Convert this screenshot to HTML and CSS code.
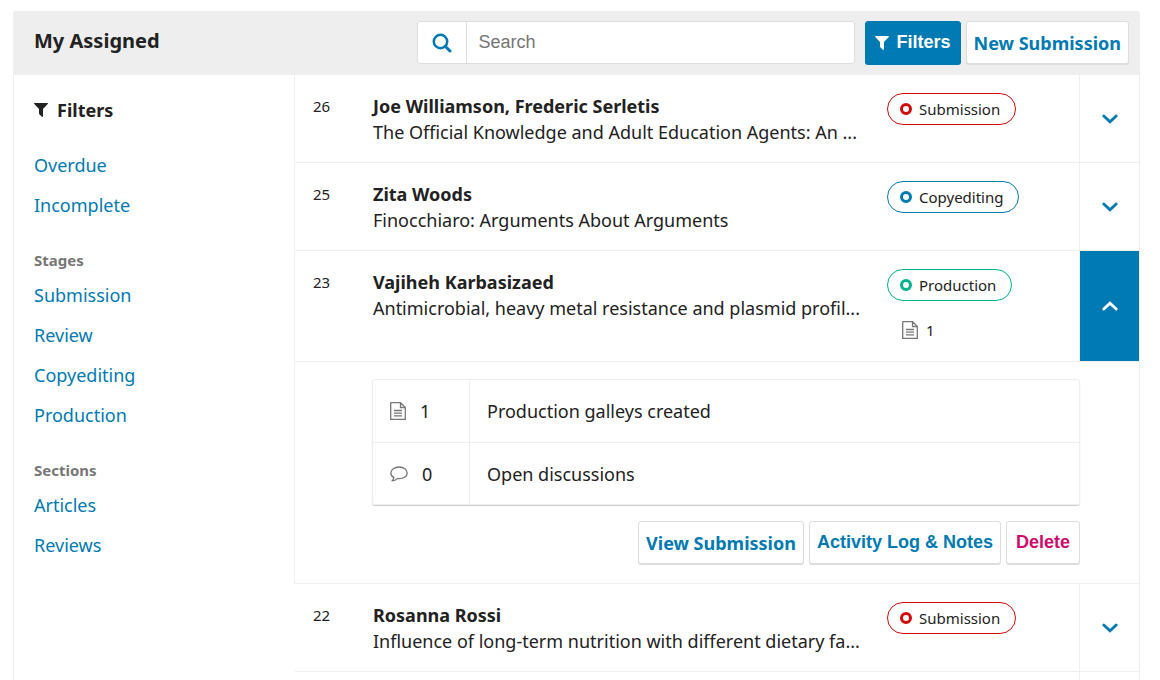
FILE: index.html
```html
<!DOCTYPE html>
<html lang="en">
<head>
<meta charset="utf-8">
<meta name="viewport" content="width=device-width, initial-scale=1">
<title>My Assigned</title>
<link rel="stylesheet" href="styles.css">
</head>
<body>
<svg class="sprite" width="0" height="0" aria-hidden="true">
  <symbol id="i-filter" viewBox="0 0 14 14"><path d="M0.6 0H13.4Q14.4 0.3 13.7 1.1L9 6V13.3Q8.8 14.3 7.9 13.7L5.4 11.2Q5 10.9 5 10.4V6L0.3 1.1Q-0.4 0.3 0.6 0Z" fill="currentColor"/></symbol>
  <symbol id="i-search" viewBox="0 0 20 20"><circle cx="8.5" cy="8.5" r="6.7" fill="none" stroke="currentColor" stroke-width="2.5"/><path d="M13.2 13.2L18 18" fill="none" stroke="currentColor" stroke-width="3" stroke-linecap="round"/></symbol>
  <symbol id="i-down" viewBox="0 0 16 10"><path d="M1.800 2L8 7.800L14.200 2" fill="none" stroke="currentColor" stroke-width="2.800" stroke-linecap="round"/></symbol>
  <symbol id="i-up" viewBox="0 0 16 10"><path d="M1.800 8L8 2.200L14.200 8" fill="none" stroke="currentColor" stroke-width="2.800" stroke-linecap="round"/></symbol>
  <symbol id="i-file" viewBox="0 0 16 18"><path d="M1.2 0.7H10.6L15.3 5.4V17.3H0.7V1.2Q0.7 0.7 1.2 0.7ZM10.5 0.8V5.5H15.2M4 8.5H12M4 11.2H12M4 13.9H12" fill="none" stroke="currentColor" stroke-width="1.3"/></symbol>
  <symbol id="i-comment" viewBox="0 0 18 16"><path d="M9.2 1C4.700 1 .8 3.500.8 6.900c0 2 1.200 3.600 3.100 4.700-.2 1.400-.9 2.300-1.900 3.300 2.300-.2 4-1 5.300-2.300.6.1 1.200.1 1.900.1 4.600 0 8-2.600 8-5.800S13.700 1 9.200 1Z" fill="none" stroke="currentColor" stroke-width="1.300" stroke-linejoin="round"/></symbol>
</svg>

<main class="panel">
  <header class="panel-header">
    <h1 class="panel-title">My Assigned</h1>
    <div class="panel-actions">
      <div class="search">
        <label class="search-label" for="search" aria-label="Search submissions"><svg class="icon-search" aria-hidden="true"><use href="#i-search"/></svg></label>
        <input class="search-input" id="search" type="search" placeholder="Search">
      </div>
      <div class="header-buttons">
        <button class="btn btn-primary" type="button"><svg class="icon-filter" aria-hidden="true"><use href="#i-filter"/></svg>Filters</button>
        <a class="btn btn-link" href="#new">New Submission</a>
      </div>
    </div>
  </header>

  <div class="panel-body">
    <aside class="sidebar">
      <h2 class="sidebar-title"><svg class="icon-filter" aria-hidden="true"><use href="#i-filter"/></svg>Filters</h2>
      <nav class="filter-group">
        <a class="filter" href="#overdue">Overdue</a>
        <a class="filter" href="#incomplete">Incomplete</a>
      </nav>
      <nav class="filter-group">
        <h3 class="filter-heading">Stages</h3>
        <a class="filter" href="#submission">Submission</a>
        <a class="filter" href="#review">Review</a>
        <a class="filter" href="#copyediting">Copyediting</a>
        <a class="filter" href="#production">Production</a>
      </nav>
      <nav class="filter-group">
        <h3 class="filter-heading">Sections</h3>
        <a class="filter" href="#articles">Articles</a>
        <a class="filter" href="#reviews">Reviews</a>
      </nav>
    </aside>

    <section class="items">
      <article class="item">
        <div class="item-summary">
          <div class="item-id">26</div>
          <div class="item-text"><div class="item-author">Joe Williamson, Frederic Serletis</div><div class="item-title">The Official Knowledge and Adult Education Agents: An ...</div></div>
          <div class="item-status"><span class="badge badge-submission">Submission</span></div>
        </div>
        <button class="expander" type="button" aria-label="Show details" aria-expanded="false"><svg class="icon-chevron" aria-hidden="true"><use href="#i-down"/></svg></button>
      </article>

      <article class="item">
        <div class="item-summary">
          <div class="item-id">25</div>
          <div class="item-text"><div class="item-author">Zita Woods</div><div class="item-title">Finocchiaro: Arguments About Arguments</div></div>
          <div class="item-status"><span class="badge badge-copyediting">Copyediting</span></div>
        </div>
        <button class="expander" type="button" aria-label="Show details" aria-expanded="false"><svg class="icon-chevron" aria-hidden="true"><use href="#i-down"/></svg></button>
      </article>

      <article class="item">
        <div class="item-summary">
          <div class="item-id">23</div>
          <div class="item-text"><div class="item-author">Vajiheh Karbasizaed</div><div class="item-title">Antimicrobial, heavy metal resistance and plasmid profil...</div></div>
          <div class="item-status"><span class="badge badge-production">Production</span><div class="item-files"><svg class="icon-file" aria-hidden="true"><use href="#i-file"/></svg>1</div></div>
        </div>
        <button class="expander expander-open" type="button" aria-label="Hide details" aria-expanded="true"><svg class="icon-chevron" aria-hidden="true"><use href="#i-up"/></svg></button>
      </article>

      <div class="details">
        <table class="stats">
          <tr><td class="stat-count"><div class="stat-value"><svg class="icon-file" aria-hidden="true"><use href="#i-file"/></svg>1</div></td><td class="stat-name">Production galleys created</td></tr>
          <tr><td class="stat-count"><div class="stat-value"><svg class="icon-comment" aria-hidden="true"><use href="#i-comment"/></svg>0</div></td><td class="stat-name">Open discussions</td></tr>
        </table>
        <div class="details-actions">
          <a class="btn btn-link" href="#view">View Submission</a>
          <button class="btn" type="button">Activity Log &amp; Notes</button>
          <button class="btn btn-danger" type="button">Delete</button>
        </div>
      </div>

      <article class="item">
        <div class="item-summary">
          <div class="item-id">22</div>
          <div class="item-text"><div class="item-author">Rosanna Rossi</div><div class="item-title">Influence of long-term nutrition with different dietary fa...</div></div>
          <div class="item-status"><span class="badge badge-submission">Submission</span></div>
        </div>
        <button class="expander" type="button" aria-label="Show details" aria-expanded="false"><svg class="icon-chevron" aria-hidden="true"><use href="#i-down"/></svg></button>
      </article>

      <div class="item item-next"><div class="item-summary"></div><div class="expander"></div></div>
    </section>
  </div>
</main>
</body>
</html>
```

FILE: styles.css
```css
*, *::before, *::after { box-sizing: border-box; }

body {
  margin: 0;
  padding: 11px 20px 0 13px;
  background: #fff;
  color: #222;
  font: 18px/26px "Noto Sans", sans-serif;
  height: 100vh;
  overflow: hidden;
}

h1, h2, h3 { margin: 0; }
a { color: #007ab2; text-decoration: none; }
.sprite { position: absolute; }

.panel {
  border: 1px solid #eee;
  border-top: 0;
  border-radius: 3px 3px 0 0;
}

.panel-header {
  display: flex;
  align-items: center;
  justify-content: space-between;
  min-height: 64px;
  padding: 10px 10px 11px 20px;
  background: #eee;
}
.panel-title { font-size: 20px; line-height: 30px; padding-bottom: 3px; }
.panel-actions { display: flex; gap: 10px; }
.header-buttons { display: flex; align-items: center; gap: 5px; }

.search {
  display: flex;
  width: 438px;
  height: 43px;
  border: 1px solid #ddd;
  border-radius: 3px;
  background: #fff;
}
.search-label {
  display: flex;
  align-items: center;
  justify-content: center;
  width: 49px;
  border-right: 1px solid #ddd;
  color: #007ab2;
}
.search-input {
  flex: 1;
  min-width: 0;
  padding: 0 12px;
  border: 0;
  background: none;
  font: 18px "Liberation Sans", sans-serif;
}
.search-input::placeholder { color: #757575; }

.btn {
  display: inline-flex;
  align-items: center;
  height: 43px;
  padding: 0 7px;
  border: 1px solid #ddd;
  border-radius: 3px;
  background: #fff;
  box-shadow: 0 1px 0 #ddd;
  color: #007ab2;
  font: bold 18px "Liberation Sans", sans-serif;
  white-space: nowrap;
}
.btn-link { font-family: "Noto Sans", sans-serif; }
.btn-primary { gap: 8px; padding: 0 9px; background: #007ab2; border-color: #007ab2; box-shadow: 0 1px 0 #007ab2; color: #fff; }
.btn-danger { padding: 0 9px; color: #d00a6c; }

.icon-filter { width: 14px; height: 14px; }
.icon-search { width: 20px; height: 20px; }
.icon-chevron { width: 16px; height: 10px; }
.icon-file { width: 16px; height: 18px; color: #777; }
.icon-comment { width: 18px; height: 16px; color: #777; }

.panel-body { display: flex; align-items: flex-start; }

.sidebar {
  flex: 0 0 281px;
  padding: 20px 20px 19px;
  border-right: 1px solid #eee;
}
.sidebar-title { display: flex; align-items: center; gap: 9px; font-size: 18px; line-height: 30px; margin-bottom: 20px; }
.filter-group { display: flex; flex-direction: column; margin-bottom: 20px; }
.filter-group:last-child { margin-bottom: 0; }
.filter-heading { color: #777; font-size: 15px; line-height: 30px; }
.filter { padding: 5px 0; line-height: 30px; }

.items { flex: 1; min-width: 0; }
.item { display: flex; border-bottom: 1px solid #eee; min-height: 88px; }
.item-summary { flex: 1; min-width: 0; display: flex; padding: 18px 0 17px 18px; }
.item-id { flex: 0 0 60px; font-size: 15px; }
.item-text { flex: 1; min-width: 0; white-space: nowrap; }
.item-author { font-weight: bold; }
.item-status { flex: 0 0 192px; font-size: 15px; }
.item-files { display: flex; align-items: center; gap: 8px; padding: 16px 0 1px 15px; }

.badge {
  display: flex;
  align-items: center;
  gap: 7px;
  width: fit-content;
  height: 32px;
  padding: 0 15px 0 12px;
  border: 1px solid;
  border-radius: 16px;
}
.badge::before {
  content: "";
  width: 12px;
  height: 12px;
  border: 3px solid;
  border-radius: 50%;
}
.badge-submission, .badge-submission::before { border-color: #d00a0a; }
.badge-copyediting, .badge-copyediting::before { border-color: #007ab2; }
.badge-production, .badge-production::before { border-color: #00b28d; }

.expander {
  flex: 0 0 60px;
  display: flex;
  align-items: center;
  justify-content: center;
  padding: 0;
  border: 0;
  border-left: 1px solid #eee;
  background: none;
  color: #007ab2;
}
.expander-open { background: #007ab2; color: #fff; }

.details { padding: 17px 59px 19px 77px; border-bottom: 1px solid #eee; }
.stats {
  width: 100%;
  border: 1px solid #eee;
  border-radius: 3px;
  border-spacing: 0;
  box-shadow: 0 1px 1px #ccc;
}
.stats td { height: 62px; padding: 0 17px; }
.stats tr + tr td { border-top: 1px solid #eee; }
.stat-count { width: 97px; border-right: 1px solid #eee; }
.stat-value { display: flex; align-items: center; gap: 14px; }
.details-actions { display: flex; justify-content: flex-end; gap: 5px; margin-top: 16px; }
```
